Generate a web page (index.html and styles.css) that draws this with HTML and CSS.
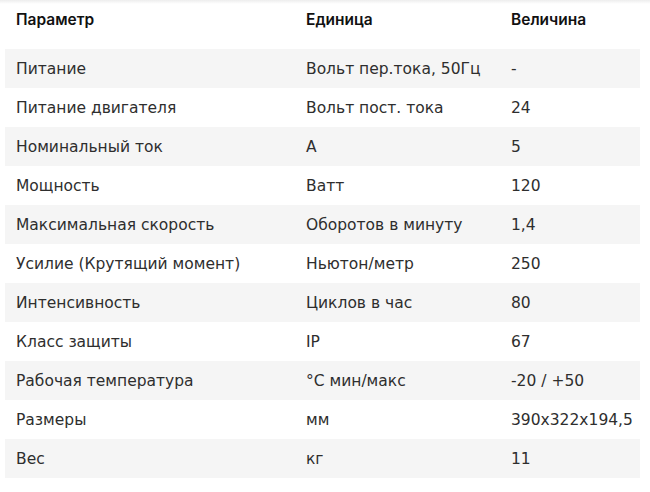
FILE: index.html
```html
<!DOCTYPE html>
<html lang="ru">
<head>
<meta charset="utf-8">
<link rel="stylesheet" href="styles.css">
</head>
<body>
<div class="topshade"></div>
<table class="specs">
  <thead>
    <tr><th>Параметр</th><th>Единица</th><th>Величина</th></tr>
  </thead>
  <tbody>
    <tr><td>Питание</td><td>Вольт пер.тока, 50Гц</td><td>-</td></tr>
    <tr><td>Питание двигателя</td><td>Вольт пост. тока</td><td>24</td></tr>
    <tr><td>Номинальный ток</td><td>А</td><td>5</td></tr>
    <tr><td>Мощность</td><td>Ватт</td><td>120</td></tr>
    <tr><td>Максимальная скорость</td><td>Оборотов в минуту</td><td>1,4</td></tr>
    <tr><td>Усилие (Крутящий момент)</td><td>Ньютон/метр</td><td>250</td></tr>
    <tr><td>Интенсивность</td><td>Циклов в час</td><td>80</td></tr>
    <tr><td>Класс защиты</td><td>IP</td><td>67</td></tr>
    <tr><td>Рабочая температура</td><td>°C мин/макс</td><td>-20 / +50</td></tr>
    <tr><td>Размеры</td><td>мм</td><td>390x322x194,5</td></tr>
    <tr><td>Вес</td><td>кг</td><td>11</td></tr>
  </tbody>
</table>
</body>
</html>
```
FILE: styles.css
```css
html, body {
  margin: 0;
  padding: 0;
  background: #ffffff;
}
body {
  position: relative;
  font-family: "DejaVu Sans", "Liberation Sans", sans-serif;
  color: #2e2e2e;
}
.topshade {
  position: absolute;
  left: 0;
  right: 0;
  top: 0;
  height: 4px;
  background: linear-gradient(#ededed, #ffffff);
}
.specs {
  margin: 0 0 0 5px;
  width: 635px;
  border-collapse: collapse;
  font-size: 15.5px;
}
.specs th {
  font-family: Inter, "Noto Sans", sans-serif;
  font-weight: 600;
  color: #111111;
  text-align: left;
  height: 49px;
  padding: 0 0 10px 11px;
  box-sizing: border-box;
}
.specs td {
  height: 39px;
  padding: 0 0 0 11px;
  box-sizing: border-box;
  vertical-align: middle;
}
.specs th:nth-child(1), .specs td:nth-child(1) { width: 290px; }
.specs th:nth-child(2), .specs td:nth-child(2) { width: 205px; }
.specs tbody tr:nth-child(odd) { background: #f5f5f5; }
```
